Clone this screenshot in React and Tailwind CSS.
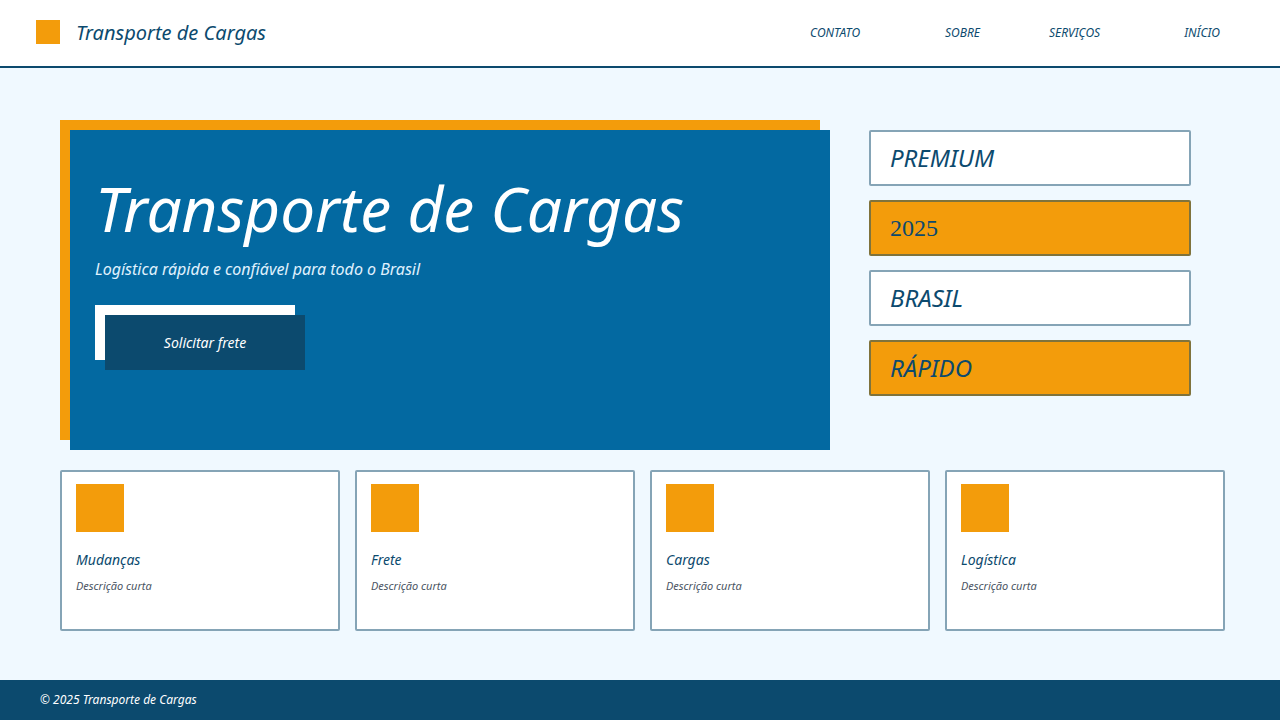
import React from "react";

const font = { fontFamily: '"Noto Sans", "Open Sans", sans-serif' };

const nav = [
    { label: "CONTATO", cls: "" },
    { label: "SOBRE", cls: "ml-[85px]" },
    { label: "SERVIÇOS", cls: "ml-[69px]" },
    { label: "INÍCIO", cls: "ml-[84px]" },
];

const tags = [
    { label: "PREMIUM", orange: false },
    { label: "2025", orange: true, serif: true },
    { label: "BRASIL", orange: false },
    { label: "RÁPIDO", orange: true },
];

const services = ["Mudanças", "Frete", "Cargas", "Logística"];

export default function App() {
    return (
        <div className="w-[1280px] h-[720px] flex flex-col italic bg-[#f0f9ff]" style={font}>
            {/* header */}
            <header className="h-[68px] bg-white border-b-2 border-[#0c4a6e] flex items-center pl-[36px] pr-[60px]">
                <div className="w-[24px] h-[24px] bg-[#f39c0b] -mt-[2px]" />
                <span className="ml-[16px] text-[20px] text-[#0c4a6e]">Transporte de Cargas</span>
                <nav className="ml-auto flex items-center">
                    {nav.map((n) => (
                        <a key={n.label} className={`${n.cls} text-[12px] text-[#0c4a6e]`}>
                            {n.label}
                        </a>
                    ))}
                </nav>
            </header>

            {/* main */}
            <main className="flex-1 px-[60px] pt-[52px]">
                <div className="flex items-start">
                    <section className="ml-[10px] mt-[10px] w-[760px] h-[320px] bg-[#0369a1] shadow-[-10px_-10px_0_0_#f39c0b] pl-[25px] pt-[41px]">
                        <h1 className="text-[62px] leading-[1.2] text-white">Transporte de Cargas</h1>
                        <p className="mt-[12px] text-[16px] leading-[24px] text-[#e0f2fe]">
                            Logística rápida e confiável para todo o Brasil
                        </p>
                        <button className="mt-[34px] ml-[10px] w-[200px] h-[55px] bg-[#0c4a6e] shadow-[-10px_-10px_0_0_#ffffff] text-white text-[14px] italic">
                            Solicitar frete
                        </button>
                    </section>

                    <div className="ml-[39px] mt-[9.5px] w-[322px] flex flex-col gap-[14px]">
                        {tags.map((t) => (
                            <div
                                key={t.label}
                                className={`h-[56px] flex items-center pl-[19px] border-2 border-[#0c4a6e]/50 rounded-[2px] text-[24px] text-[#0c4a6e] ${
                                    t.orange ? "bg-[#f39c0b]" : "bg-white"
                                }`}
                            >
                                {t.serif ? (
                                    <span className="not-italic" style={{ fontFamily: '"Liberation Serif", serif' }}>
                                        {t.label}
                                    </span>
                                ) : (
                                    <span>{t.label}</span>
                                )}
                            </div>
                        ))}
                    </div>
                </div>

                <div className="mt-[19.5px] grid grid-cols-[repeat(4,280px)] gap-[15px]">
                    {services.map((s) => (
                        <div key={s} className="h-[161px] bg-white border-2 border-[#0c4a6e]/50 rounded-[2px] px-[14px] pt-[12px]">
                            <div className="w-[48px] h-[48px] bg-[#f39c0b]" />
                            <div className="mt-[18px] text-[14px] leading-[20px] text-[#0c4a6e]">{s}</div>
                            <div className="mt-[8px] text-[11px] leading-[16px] text-[#4b5563]">Descrição curta</div>
                        </div>
                    ))}
                </div>
            </main>

            {/* footer */}
            <footer className="h-[40px] bg-[#0c4a6e] flex items-center px-[40px] text-[12px] text-white">
                © 2025 Transporte de Cargas
            </footer>
        </div>
    );
}
